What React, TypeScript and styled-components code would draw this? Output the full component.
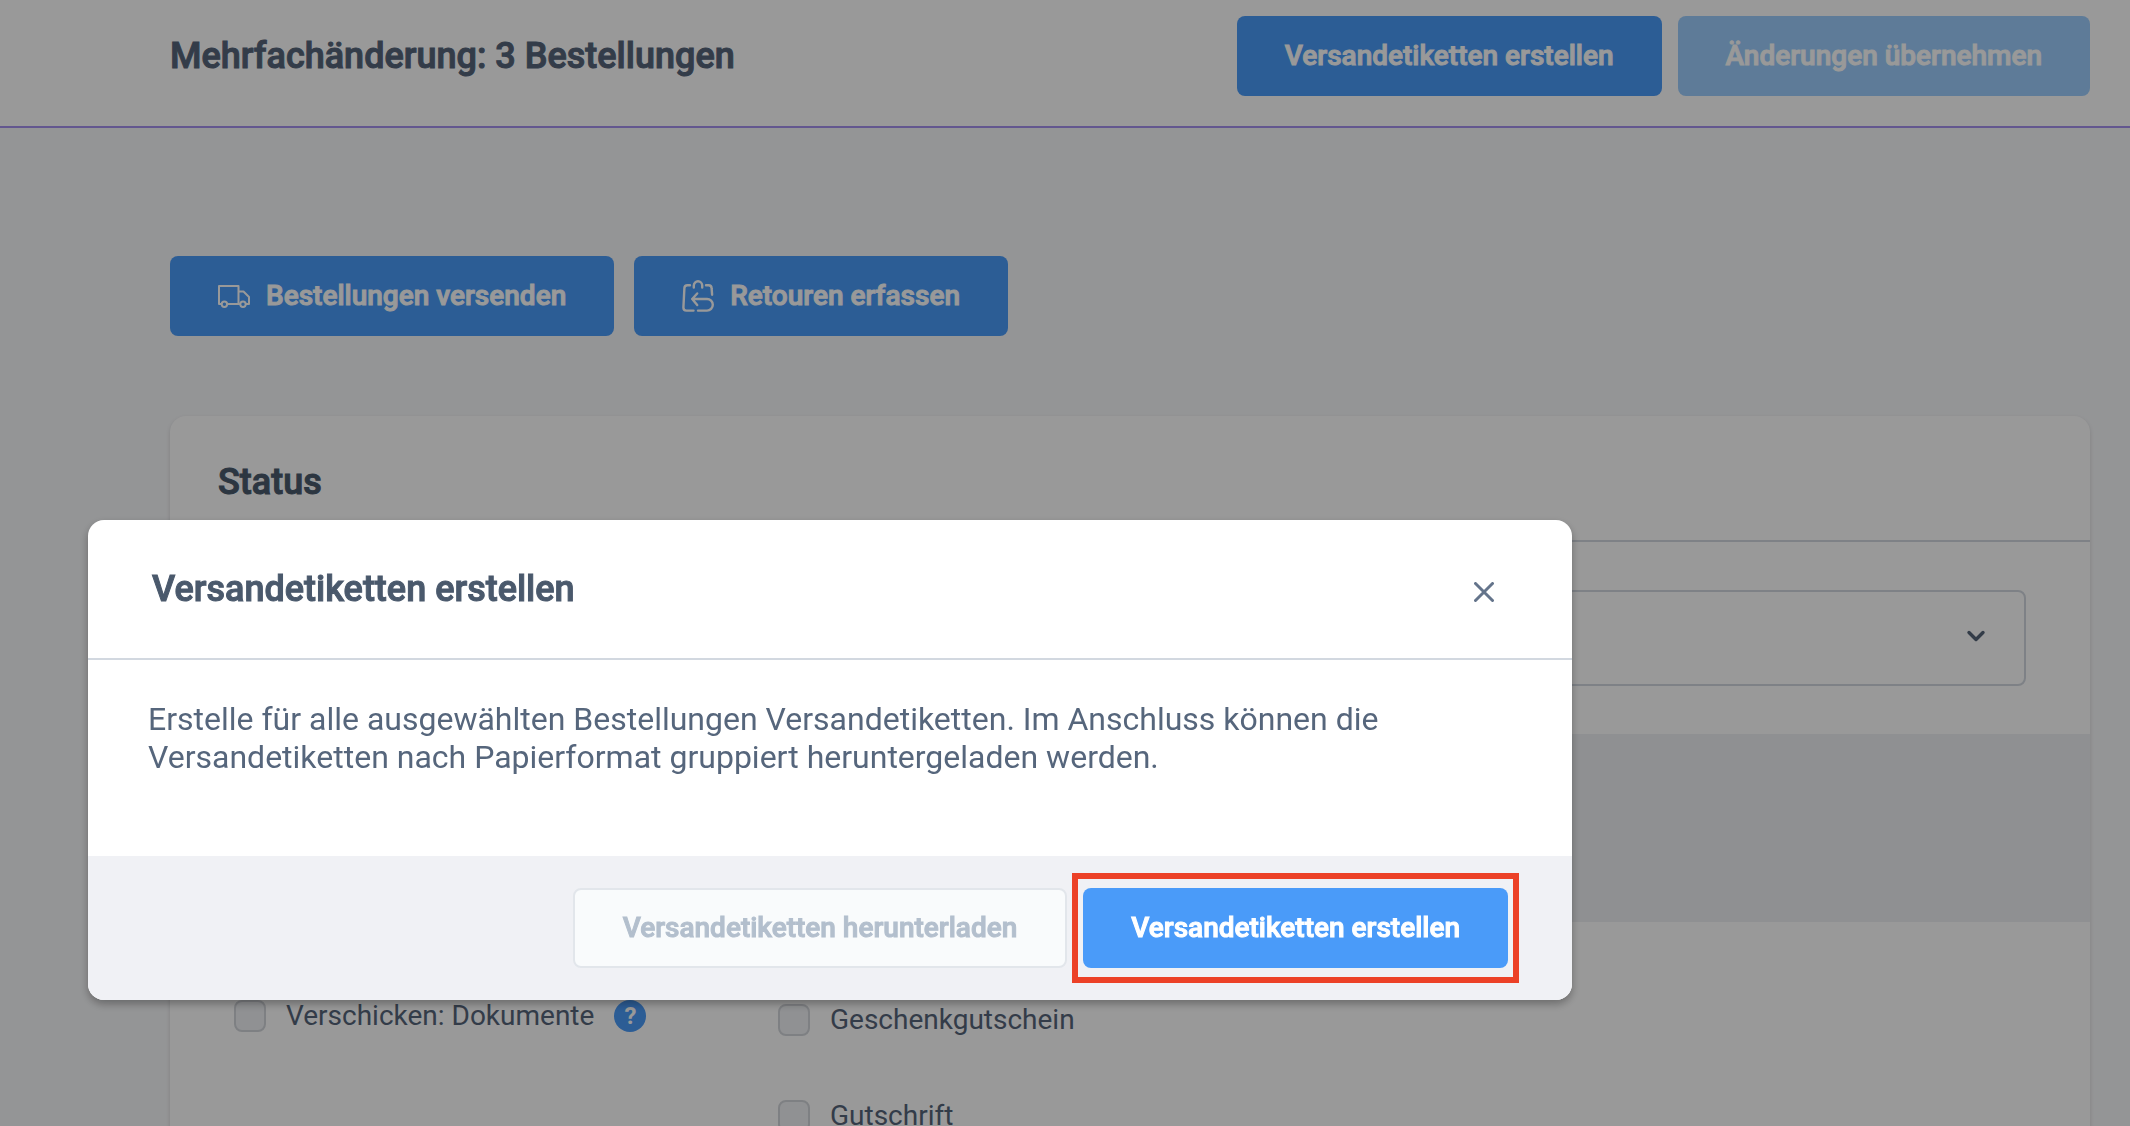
import React from "react";
import styled, { createGlobalStyle, css } from "styled-components";

const Global = createGlobalStyle`
  *, *::before, *::after { box-sizing: border-box; }
  html, body { margin: 0; }
  html { height: 100%; overflow: hidden; }
  body {
    min-height: 100%;
    background: #f7f8fa;
    color: #56657a;
    font-family: Roboto, "Liberation Sans", sans-serif;
    font-size: 28px;
    line-height: 36px;
  }
  h1, h2, p { margin: 0; }
`;

/* Medium cut, thickened, for titles and button captions. */
const strong = css`
  font-weight: 500;
  -webkit-text-stroke: 1px currentColor;
`;

const Page = styled.div`
  height: 100vh;
  overflow: hidden;
`;

const Header = styled.header`
  display: flex;
  align-items: flex-start;
  justify-content: space-between;
  height: 128px;
  padding: 16px 40px 0 170px;
  background: #fff;
  border-bottom: 2px solid #a591ee;
`;

const Title = styled.h1`
  font-size: 36px;
  line-height: 80px;
  ${strong}
`;

const ButtonRow = styled.div<{ $gap: number }>`
  display: flex;
  gap: ${(p) => p.$gap}px;
`;

const Button = styled.button<{ $variant?: "primary" | "muted" | "outline" }>`
  display: inline-flex;
  align-items: center;
  gap: 16px;
  height: 80px;
  padding: 0 48px;
  border: 0;
  border-radius: 8px;
  background: #4a9bf9;
  color: #fff;
  font-family: inherit;
  font-size: 28px;
  line-height: 36px;
  white-space: nowrap;
  cursor: pointer;
  ${strong}
  ${(p) =>
    p.$variant === "muted" &&
    css`
      background: #9dcefd;
    `}
  ${(p) =>
    p.$variant === "outline" &&
    css`
      border: 2px solid #e2e6eb;
      background: #f9fbfc;
      color: #b3bfcd;
    `}
  &:disabled { cursor: default; }
`;

const Main = styled.main`
  display: flex;
  flex-direction: column;
  gap: 80px;
  padding: 128px 40px 0 170px;
`;

const Card = styled.section`
  border-radius: 16px;
  background: #fff;
  box-shadow: 0 2px 4px rgba(0, 0, 0, 0.14);
`;

const CardHeader = styled.header`
  height: 126px;
  padding: 0 48px;
  border-bottom: 2px solid #d2d8e0;
`;

const CardTitle = styled.h2`
  color: #4a5a6d;
  font-size: 36px;
  line-height: 132px;
  ${strong}
`;

const CardBody = styled.div`
  padding: 48px 64px;
`;

const SelectBox = styled.label`
  display: grid;
  align-items: center;
  & > * { grid-area: 1 / 1; }
  & > svg { justify-self: end; margin: 0 40px 4px 0; pointer-events: none; }
`;

const Select = styled.select`
  appearance: none;
  width: 100%;
  height: 96px;
  padding: 0 80px 0 32px;
  border: 2px solid #d2d8e0;
  border-radius: 8px;
  background: #fff;
  color: inherit;
  font: inherit;
`;

const CardFooter = styled.div`
  height: 188px;
  background: #eef0f3;
`;

const Options = styled.div`
  display: grid;
  grid-template-columns: 544px 1fr;
  align-items: start;
  padding: 76px 64px;
`;

const OptionList = styled.div<{ $top?: number }>`
  display: flex;
  flex-direction: column;
  gap: 60px;
  padding-top: ${(p) => p.$top ?? 0}px;
`;

const Option = styled.div`
  display: flex;
  align-items: center;
  gap: 20px;
  height: 36px;
`;

const OptionLabel = styled.label`
  display: flex;
  align-items: center;
  gap: 20px;
`;

const Checkbox = styled.input`
  appearance: none;
  width: 32px;
  height: 32px;
  margin: 0;
  border: 2px solid #d2d5da;
  border-radius: 8px;
  background: #f0f2f5;
`;

const HelpButton = styled.button`
  width: 32px;
  height: 32px;
  padding: 0;
  border: 0;
  border-radius: 50%;
  background: #4a9bf9;
  color: #fff;
  font: 700 24px/32px Roboto, "Liberation Sans", sans-serif;
`;

const Backdrop = styled.div`
  position: fixed;
  inset: 0;
  padding: 520px 88px 0;
  background: rgba(0, 0, 0, 0.4);
`;

const Dialog = styled.section`
  width: 100%;
  max-width: 1484px;
  overflow: hidden;
  border-radius: 16px;
  background: #fff;
  color: #4a596c;
  box-shadow: 0 4px 8px rgba(0, 0, 0, 0.3);
`;

const DialogHeader = styled.header`
  display: flex;
  align-items: center;
  justify-content: space-between;
  height: 140px;
  padding: 0 64px;
  border-bottom: 2px solid #d2d8e0;
`;

const DialogTitle = styled.h2`
  font-size: 36px;
  line-height: 40px;
  ${strong}
`;

const CloseButton = styled.button`
  display: grid;
  place-items: center;
  width: 48px;
  height: 48px;
  margin-top: 6px;
  padding: 0;
  border: 0;
  background: none;
  color: #64748b;
  cursor: pointer;
`;

const DialogText = styled.p`
  padding: 40px 60px 80px;
  color: #56667c;
  font-size: 32px;
  line-height: 38px;
`;

const DialogFooter = styled.footer`
  display: flex;
  justify-content: flex-end;
  gap: 16px;
  padding: 32px 64px;
  background: #f0f1f5;
`;

const Highlight = styled.div`
  display: flex;
  position: relative;
  &::after {
    content: "";
    position: absolute;
    inset: -15px -11px;
    border: 6px solid #ec4127;
    pointer-events: none;
  }
`;

const TruckIcon = () => (
  <svg width="32" height="24" viewBox="0 0 32 24" fill="none" stroke="currentColor" strokeWidth="2" strokeLinejoin="round" aria-hidden="true">
    <path d="M3.500 20H1V2h19.500v18H9.300M20.500 7.500h5L31 13v7h-3M20.500 20H22" />
    <circle cx="6.400" cy="20.200" r="2.700" />
    <circle cx="25" cy="20.200" r="2.700" />
  </svg>
);

const ReturnIcon = () => (
  <svg width="32" height="32" viewBox="0 0 32 32" fill="none" stroke="currentColor" strokeWidth="2.400" strokeLinecap="round" strokeLinejoin="round" aria-hidden="true">
    <path d="M8 5.200H5.500Q2.500 5.200 2.400 8L1.400 27.500Q1.400 30.600 4.500 30.600H11.500" />
    <path d="M24 5.200h2.500q3 0 3.100 3l.5 6.500" />
    <path d="M11.800 7.500V5.500a4.200 4.200 0 0 1 8.400 0V7.500" />
    <path d="M15.200 13.500L10.200 19L15.200 25M10.200 19H25a5.800 5.800 0 0 1 0 11.600H16" />
  </svg>
);

const CloseIcon = () => (
  <svg width="20" height="20" viewBox="0 0 20 20" fill="none" stroke="currentColor" strokeWidth="3" strokeLinecap="round" aria-hidden="true">
    <path d="M1.500 1.500l17 17M18.500 1.500l-17 17" />
  </svg>
);

const ChevronIcon = () => (
  <svg width="20" height="12" viewBox="0 0 20 12" fill="none" stroke="#566478" strokeWidth="3.400" strokeLinecap="round" strokeLinejoin="round" aria-hidden="true">
    <path d="M3 2.500l7 7 7-7" />
  </svg>
);

export default function App() {
  return (
    <>
      <Global />
      <Page>
        <Header>
          <Title>Mehrfachänderung: 3 Bestellungen</Title>
          <ButtonRow $gap={16}>
            <Button type="button">Versandetiketten erstellen</Button>
            <Button type="button" $variant="muted" disabled>Änderungen übernehmen</Button>
          </ButtonRow>
        </Header>
        <Main>
          <ButtonRow $gap={20}>
            <Button type="button"><TruckIcon />Bestellungen versenden</Button>
            <Button type="button"><ReturnIcon />Retouren erfassen</Button>
          </ButtonRow>
          <Card>
            <CardHeader>
              <CardTitle>Status</CardTitle>
            </CardHeader>
            <CardBody>
              <SelectBox>
                <Select aria-label="Status" />
                <ChevronIcon />
              </SelectBox>
            </CardBody>
            <CardFooter />
            <Options>
              <OptionList>
                <Option>
                  <OptionLabel><Checkbox type="checkbox" />Verschicken: Dokumente</OptionLabel>
                  <HelpButton type="button">?</HelpButton>
                </Option>
              </OptionList>
              <OptionList $top={4}>
                <Option>
                  <OptionLabel><Checkbox type="checkbox" />Geschenkgutschein</OptionLabel>
                </Option>
                <Option>
                  <OptionLabel><Checkbox type="checkbox" />Gutschrift</OptionLabel>
                </Option>
              </OptionList>
            </Options>
          </Card>
        </Main>
      </Page>
      <Backdrop>
        <Dialog role="dialog" aria-modal="true" aria-labelledby="dialog-title">
          <DialogHeader>
            <DialogTitle id="dialog-title">Versandetiketten erstellen</DialogTitle>
            <CloseButton type="button" aria-label="Schließen"><CloseIcon /></CloseButton>
          </DialogHeader>
          <DialogText>
            Erstelle für alle ausgewählten Bestellungen Versandetiketten. Im Anschluss können die
            Versandetiketten nach Papierformat gruppiert heruntergeladen werden.
          </DialogText>
          <DialogFooter>
            <Button type="button" $variant="outline" disabled>Versandetiketten herunterladen</Button>
            <Highlight>
              <Button type="button">Versandetiketten erstellen</Button>
            </Highlight>
          </DialogFooter>
        </Dialog>
      </Backdrop>
    </>
  );
}
